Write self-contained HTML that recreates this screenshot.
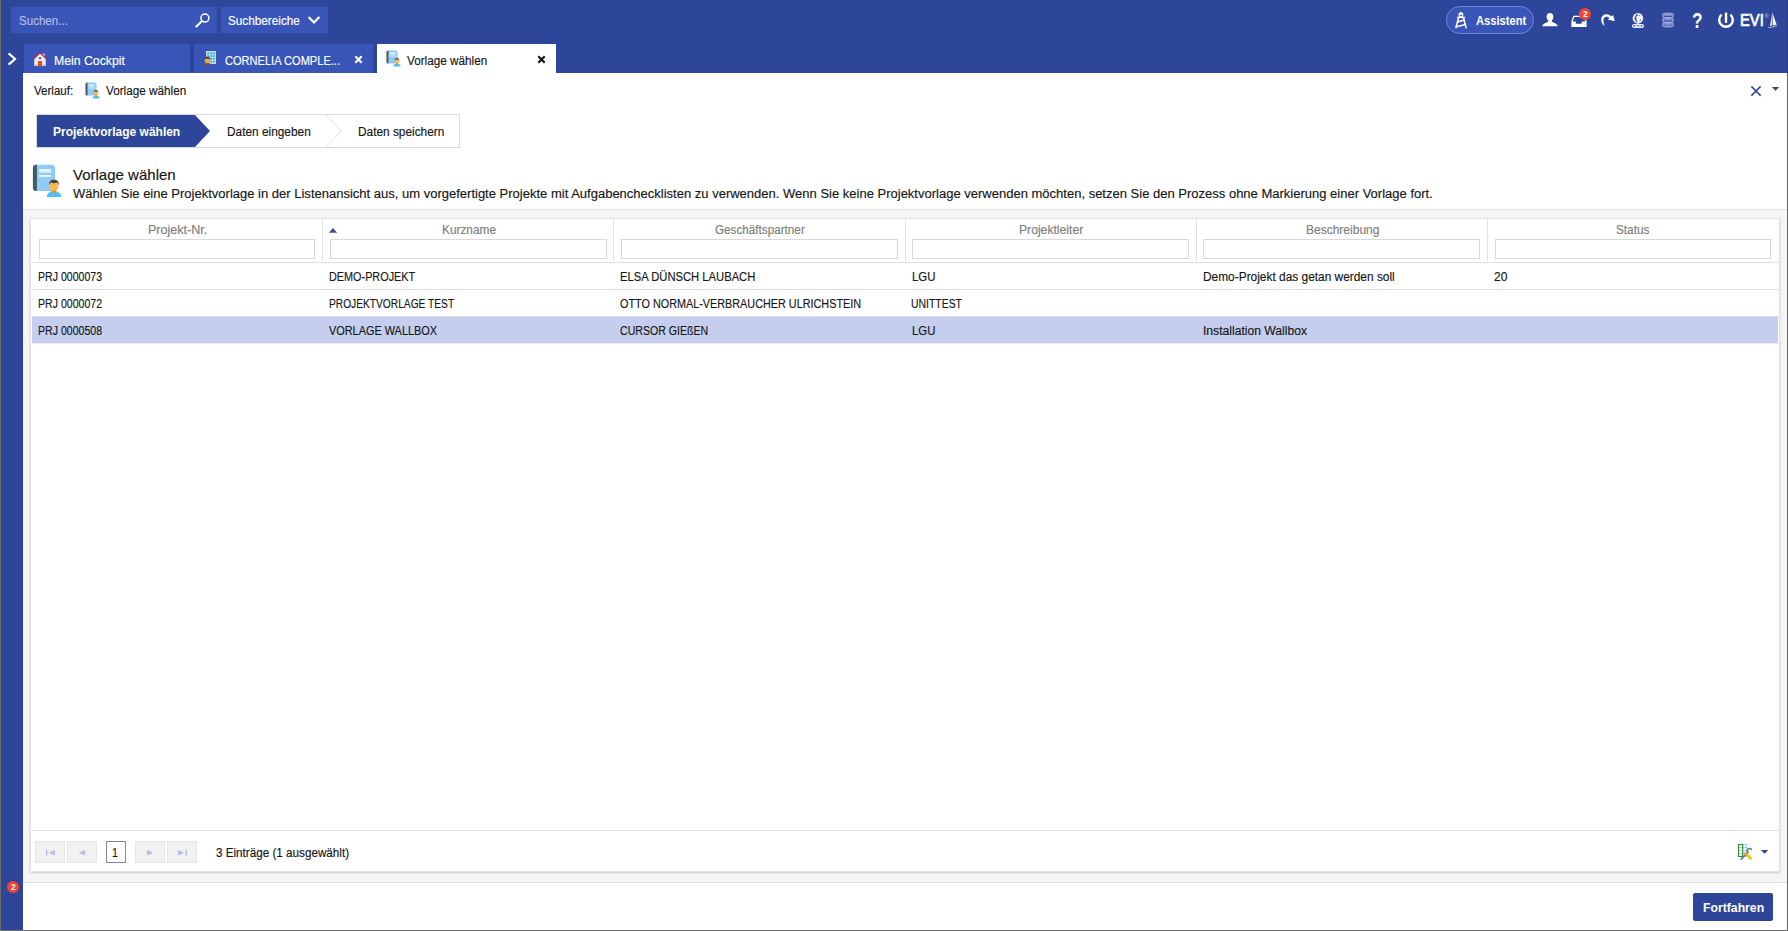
<!DOCTYPE html>
<html lang="de"><head><meta charset="utf-8"><title>Vorlage wählen</title>
<style>
html,body{margin:0;padding:0}
body{width:1788px;height:931px;overflow:hidden;position:relative;background:#2e4699;font-family:"Liberation Sans",sans-serif}
.abs,#texts .t,body>div,body>svg{position:absolute}
#texts{left:0;top:0;width:0;height:0}
#texts .t{white-space:nowrap;transform-origin:0 50%;display:block}
.tab{background:#3955b8;top:44px;height:29px}
.tab.active{background:#fff}
#content{left:23px;top:73px;width:1764px;height:857px;background:#fff}
#graybg{left:23px;top:209px;width:1764px;height:674px;background:#f5f5f5;border-top:1px solid #e2e2e2;border-bottom:1px solid #dcdcdc;box-sizing:border-box}
#panel{left:30px;top:218px;width:1750px;height:654px;background:#fff;box-sizing:border-box;border:1px solid #e3e3e3;box-shadow:0 1px 2px rgba(0,0,0,.18)}
.colsep{top:219px;width:1px;height:42px;background:#e2e2e2}
.hline{left:31px;width:1748px;height:1px;background:#e0e0e0}
.filter{top:239px;height:20px;width:276px;box-sizing:border-box;border:1px solid #d9d9d9;background:#fff}
.pbtn{top:841px;height:22px;width:30px;box-sizing:border-box;border:1px solid #e4e4e4;background:#f1f1f1}

</style></head>
<body>
<div id="leftedge" style="left:0;top:0;width:1px;height:931px;background:#6a6a6a"></div>
<div id="searchbox" style="left:11px;top:7px;width:206px;height:26px;background:#3955b8"></div>
<div id="searcharea" style="left:221px;top:7px;width:107px;height:26px;background:#3955b8"></div>
<div id="assist" style="left:1446px;top:6px;width:88px;height:28px;box-sizing:border-box;border:1px solid #6f86d4;border-radius:14px;background:#3955b8"></div>
<div class="tab" style="left:24px;width:166px"></div>
<div class="tab" style="left:194px;width:179px"></div>
<div class="tab active" style="left:377px;width:179px"></div>
<div id="content"></div>
<div id="graybg"></div>
<div id="panel"></div>
<div id="selrow" style="left:32px;top:317px;width:1746px;height:26px;background:#c5ceee"></div>
<div class="hline" style="top:262px"></div>
<div class="hline" style="top:289px"></div>
<div class="hline" style="top:316px"></div>
<div class="hline" style="top:343px;background:#ececec"></div>
<div class="hline" style="top:830px"></div>
<div class="colsep" style="left:322px"></div>
<div class="colsep" style="left:613px"></div>
<div class="colsep" style="left:905px"></div>
<div class="colsep" style="left:1196px"></div>
<div class="colsep" style="left:1487px"></div>
<div class="filter" style="left:39px"></div>
<div class="filter" style="left:330px;width:277px"></div>
<div class="filter" style="left:621px;width:277px"></div>
<div class="filter" style="left:912px;width:277px"></div>
<div class="filter" style="left:1203px;width:277px"></div>
<div class="filter" style="left:1495px"></div>
<div class="pbtn" style="left:35px"></div>
<div class="pbtn" style="left:67px"></div>
<div class="pbtn" style="left:135px"></div>
<div class="pbtn" style="left:167px"></div>
<div id="pagenum" style="left:106px;top:841px;width:20px;height:22px;box-sizing:border-box;border:1px solid #8a8a8a;background:#fff"></div>
<div id="steps" style="left:36px;top:114px;width:424px;height:34px;box-sizing:border-box;border:1px solid #dcdcdc;background:#fff"></div>
<svg id="stepsvg" style="left:36px;top:114px" width="424" height="34" viewBox="0 0 424 34">
  <polygon points="1,1 159,1 174,17 159,33 1,33" fill="#2e4699"/>
  <polyline points="290,0.5 305,17 290,33.5" fill="none" stroke="#e2e2e2" stroke-width="1"/>
</svg>
<div id="btn" style="left:1693px;top:893px;width:80px;height:28px;background:#2e4699;border-radius:2px"></div>
<div id="bottomedge" style="left:0;top:930px;width:1788px;height:1px;background:#6e6e6e"></div>
<div id="rightedge" style="left:1787px;top:73px;width:1px;height:858px;background:#666"></div>
<div id="rightedge2" style="left:1787px;top:0;width:1px;height:73px;background:#2a3f8a"></div>
<svg width="0" height="0" style="left:0;top:0">
  <defs>
    <symbol id="bookperson" viewBox="0 0 32 34">
      <path d="M3.9,0.8 H19.6 a3.5,3.5 0 0 1 3.5,3.5 V26.9 H3.9 Z" fill="#90caf9"/>
      <path d="M4.9,0.8 H3.9 a3,3 0 0 0 -3,3 V23.9 a3,3 0 0 0 3,3 H4.9 Z" fill="#455a64"/>
      <rect x="7" y="5" width="12" height="3.7" fill="#e3f2fd"/>
      <rect x="7" y="11" width="12" height="2" fill="#e3f2fd"/>
      <path d="M14.8,33 c0,-3.6 3,-6 7.2,-6 s7.2,2.4 7.2,6 Z" fill="#4fc3f7"/>
      <path d="M19.6,27.4 a2.5,2.2 0 0 0 4.8,0 Z" fill="#0288d1"/>
      <path d="M20.2,25 h3.6 v2.4 a1.8,1.8 0 0 1 -3.6,0 Z" fill="#ff9800"/>
      <ellipse cx="22" cy="21.6" rx="4.5" ry="5" fill="#ffb74d"/>
      <path d="M17.3,21.2 c-0.6,-3.6 1.6,-5.4 4.7,-5.4 s5.3,1.8 4.7,5.4 c-0.6,-1.6 -1.2,-2.2 -2,-2.6 c-1.6,0.8 -3.8,0.8 -5.4,0 c-0.8,0.4 -1.4,1 -2,2.6 Z" fill="#424242"/>
    </symbol>
  </defs>
</svg>
<!-- main big icon -->
<svg style="left:32px;top:164px" width="32" height="34"><use href="#bookperson"/></svg>
<!-- breadcrumb icon -->
<svg style="left:85px;top:81.5px" width="16" height="17"><use href="#bookperson"/></svg>
<!-- active tab icon -->
<svg style="left:385.5px;top:50px" width="16" height="17"><use href="#bookperson"/></svg>

<!-- sidebar chevron -->
<svg style="left:6px;top:51px" width="12" height="16" viewBox="0 0 12 16"><polyline points="2.6,2.4 9,8 2.6,13.6" fill="none" stroke="#fff" stroke-width="2.2" stroke-linejoin="miter"/></svg>
<!-- house -->
<svg style="left:33px;top:51px" width="14" height="16" viewBox="0 0 14 16">
  <rect x="9.8" y="2.6" width="1.8" height="3.4" fill="#e8eaf6"/>
  <path d="M1.2,7.6 L7,2.2 L12.8,7.6 V15 H1.2 Z" fill="#e8eaf6"/>
  <rect x="1.2" y="13.2" width="11.6" height="1.8" fill="#c5cae9"/>
  <path d="M0.4,8 L7,1.6 L13.6,8" fill="none" stroke="#c62828" stroke-width="1.3"/>
  <rect x="5" y="10" width="4" height="5" fill="#e64a19"/>
  <rect x="6.1" y="6.3" width="1.8" height="1.8" fill="#0d47a1"/>
</svg>
<!-- tab2 icon: building + person -->
<svg style="left:203px;top:50px" width="15" height="17" viewBox="0 0 15 17">
  <rect x="3" y="1" width="10" height="13" fill="#cfd8dc"/>
  <g fill="#29b6f6">
    <rect x="4.2" y="2.4" width="2" height="1.8"/><rect x="7" y="2.4" width="2" height="1.8"/><rect x="9.8" y="2.4" width="2" height="1.8"/>
    <rect x="4.2" y="5.2" width="2" height="1.8"/><rect x="7" y="5.2" width="2" height="1.8"/><rect x="9.8" y="5.2" width="2" height="1.8"/>
    <rect x="7" y="8" width="2" height="1.8"/><rect x="9.8" y="8" width="2" height="1.8"/>
    <rect x="7" y="10.8" width="2" height="1.8"/><rect x="9.8" y="10.8" width="2" height="1.8"/>
  </g>
  <path d="M1.4,13 h6 l-1.2,1.6 h-3.6 Z" fill="#546e7a"/>
  <ellipse cx="4.4" cy="10.2" rx="2.7" ry="3" fill="#ffa726"/>
  <path d="M1.6,9.6 c0,-2.4 1.2,-3 2.8,-3 s2.8,0.6 2.8,3 c-0.8,-1.2 -4.8,-1.2 -5.6,0 Z" fill="#5d4037"/>
  <path d="M3.8,13.2 h1.2 l0.3,2 l-0.9,1.2 l-0.9,-1.2 Z" fill="#d32f2f"/>
</svg>
<!-- tab close icons -->
<svg style="left:354px;top:55px" width="9" height="9" viewBox="0 0 9 9"><path d="M1.3,1.3 L7.7,7.7 M7.7,1.3 L1.3,7.7" stroke="#fff" stroke-width="2.1"/></svg>
<svg style="left:537px;top:55px" width="9" height="9" viewBox="0 0 9 9"><path d="M1.3,1.3 L7.7,7.7 M7.7,1.3 L1.3,7.7" stroke="#111" stroke-width="2.1"/></svg>
<!-- search magnifier -->
<svg style="left:195px;top:12px" width="16" height="16" viewBox="0 0 16 16"><circle cx="9.9" cy="6.1" r="4" fill="none" stroke="#fff" stroke-width="1.5"/><path d="M6.9,9.1 L1.4,14.4" stroke="#fff" stroke-width="2.1" stroke-linecap="round"/></svg>
<!-- suchbereiche chevron -->
<svg style="left:307px;top:15px" width="14" height="10" viewBox="0 0 14 10"><polyline points="1.6,2 7,7.6 12.4,2" fill="none" stroke="#fff" stroke-width="2.1"/></svg>
<!-- lighthouse -->
<svg style="left:1454px;top:11px" width="14" height="18" viewBox="0 0 14 18">
  <path d="M6.900,0.800 L10.100,3.300 H3.700 Z" fill="#fff"/>
  <path d="M4.700,3.200 H9.100 V6 H4.700 Z M6,4 H7.900 V5.200 H6 Z" fill="#fff" fill-rule="evenodd"/>
  <rect x="2.900" y="5.800" width="8.200" height="1.300" fill="#fff"/>
  <g fill="none" stroke="#fff" stroke-width="1.500" stroke-linecap="round">
    <path d="M4.400,7.200 L1.900,16.800 M9.600,7.200 L12.100,16.800"/>
    <path d="M3.600,11 L10.300,9" stroke-width="1.400"/>
    <path d="M2.500,15.800 L11.400,13.400" stroke-width="1.600"/>
  </g>
</svg>
<!-- user -->
<svg style="left:1542px;top:12px" width="16" height="16" viewBox="0 0 16 16">
  <path d="M8,1 c2.2,0 3.4,1.6 3.4,3.8 c0,1.8 -0.8,3.2 -1.6,3.9 v1 c1.4,0.8 5.4,1.6 6,4.6 H0.2 c0.6,-3 4.6,-3.800 6,-4.6 v-1 c-0.8,-0.700 -1.600,-2.100 -1.600,-3.900 c0,-2.200 1.200,-3.800 3.400,-3.800 Z" fill="#fff"/>
</svg>
<!-- inbox -->
<svg style="left:1571px;top:15px" width="16" height="13" viewBox="0 0 16 13">
  <path d="M0.400,6.300 L2.400,0.800 H13.600 L15.600,6.300 V12.100 H0.400 Z M1.700,6.500 L3.300,1.900 H12.700 L14.300,6.500 H10.700 V8.700 H4.800 V6.500 Z" fill="#fff" fill-rule="evenodd"/>
</svg>
<!-- redo -->
<svg style="left:1600px;top:12px" width="16" height="16" viewBox="0 0 16 16">
  <path d="M4.2,13.8 C2.2,12 1.2,10 1.2,7.5 C1.2,4.4 3.6,2.200 6.500,2.200 C8.400,2.200 9.900,3 11,4.400 L13.200,3 L14.700,9.200 L7.800,7.400 L9.400,6.200 C8.600,5.200 7.600,4.800 6.500,4.800 C4.800,4.800 3.400,6.200 3.400,8 C3.400,10 3.800,12 4.600,13.600 Z" fill="#fff"/>
</svg>
<!-- globe cmd -->
<svg style="left:1631px;top:12px" width="14" height="17" viewBox="0 0 14 17">
  <circle cx="6.900" cy="6.200" r="5.300" fill="#f1f3fb"/>
  <path d="M5.400,2.300 L7.600,2.600 L6.600,3.800 L5.600,4.300 L5,5.800 L5.800,7 L5.400,8.400 L6.200,9.600 L5.800,10.600 L4.600,9.400 L4,7.400 L3.200,6 L4.200,4.400 Z M9.200,7.400 L10.200,7 L9.600,8.600 L8.400,9.400 Z M7.800,3 L9,3.200 L8.200,4.200 Z" fill="#3c54a8"/>
  <rect x="6.300" y="11.200" width="1.300" height="1.400" fill="#e4e8f7"/>
  <rect x="1.100" y="12" width="11.900" height="3.900" rx="1.700" fill="#e4e8f7"/>
  <circle cx="3.300" cy="13.800" r="0.900" fill="#3c54a8"/><circle cx="10.600" cy="13.800" r="0.900" fill="#3c54a8"/>
  <path d="M5.400,13.800 h3.200" stroke="#5d72bd" stroke-width="0.900"/>
</svg>
<!-- database -->
<svg style="left:1661px;top:12px" width="14" height="16" viewBox="0 0 14 16">
  <g fill="#6275c1" stroke="#a7b3e0" stroke-width="1">
    <rect x="1.500" y="10.400" width="11" height="4.500" rx="2.300"/>
    <rect x="1.500" y="5.800" width="11" height="4.200" rx="2.100"/>
    <rect x="1.500" y="1.300" width="11" height="4.100" rx="2.050"/>
  </g>
  <g fill="#8f9dd5"><ellipse cx="7" cy="2.700" rx="4.200" ry="0.900"/><ellipse cx="7" cy="7.100" rx="4.200" ry="0.800"/><ellipse cx="7" cy="11.700" rx="4.200" ry="0.800"/></g>
  <g stroke="#2e4699" stroke-width="0.800"><path d="M3,4.500 h8 M3,9.100 h8"/></g>
</svg>
<!-- power -->
<svg style="left:1717px;top:11px" width="18" height="18" viewBox="0 0 18 18">
  <path d="M4.630,3.690 A6.800,6.800 0 1 0 13.370,3.690" fill="none" stroke="#fff" stroke-width="2.400"/>
  <path d="M9,1.600 V11.900" stroke="#fff" stroke-width="2.400"/>
</svg>
<!-- sail -->
<svg style="left:1767px;top:11px" width="11" height="18" viewBox="0 0 11 18">
  <path d="M5.300,1.300 L9.600,13.500 L5.700,14.600 Z" fill="#f4f6fc"/>
  <path d="M4.900,3 L5.100,14.700 L2.700,14.900 C3.800,11 4.500,7 4.900,3 Z" fill="#cfd6ef"/>
  <path d="M1.100,16.500 Q5.600,16.300 9.900,13.900 L9.600,15.100 Q6,17.100 1.100,16.900 Z" fill="#e9ecf8"/>
</svg>
<!-- content close X + dropdown -->
<svg style="left:1750px;top:85px" width="12" height="12" viewBox="0 0 12 12"><path d="M1.400,1.400 L10.600,10.600 M10.600,1.400 L1.400,10.600" stroke="#2e4699" stroke-width="1.500"/></svg>
<svg style="left:1771px;top:86px" width="9" height="6" viewBox="0 0 9 6"><path d="M0.800,1 H8.200 L4.500,4.800 Z" fill="#2e4699"/></svg>
<!-- sort arrow -->
<svg style="left:328px;top:227px" width="10" height="7" viewBox="0 0 10 7"><path d="M0.800,5.800 L5,1 L9.200,5.800 Z" fill="#345199"/></svg>
<!-- pager icons -->
<svg style="left:35px;top:841px" width="162" height="22" viewBox="0 0 162 22" fill="#b5bfe6">
  <rect x="11" y="9" width="1.400" height="5.600"/><path d="M20,9 V14.600 L13.600,11.800 Z"/>
  <path d="M50,9 V14.600 L43.600,11.800 Z"/>
  <path d="M112,9 V14.600 L118.400,11.800 Z"/>
  <path d="M143,9 V14.600 L149.400,11.800 Z"/><rect x="150.600" y="9" width="1.400" height="5.600"/>
</svg>
<!-- table config icon -->
<svg style="left:1737px;top:843px" width="17" height="18" viewBox="0 0 17 18">
  <rect x="6" y="1.400" width="3.800" height="12.200" fill="#fff" stroke="#90caf9" stroke-width="0.900"/>
  <path d="M6,4.500 h3.800 M6,7.400 h3.800 M6,10.500 h3.800" stroke="#90caf9" stroke-width="0.900"/>
  <rect x="1.500" y="1.500" width="4.100" height="12" fill="#fff" stroke="#2e8b2e" stroke-width="1.100"/>
  <path d="M2,4.500 h3.200 M2,7.400 h3.200 M2,10.500 h3.200" stroke="#90caf9" stroke-width="0.900"/>
  <path d="M4.300,16.200 L11,9.200" stroke="#607d8b" stroke-width="1.700" stroke-linecap="round"/>
  <path d="M11.300,9.700 a2.300,2.300 0 1 1 3.400,-2.600" fill="none" stroke="#607d8b" stroke-width="1.500"/>
  <path d="M4.600,6.800 L8.600,10.600" stroke="#b0bec5" stroke-width="1"/>
  <path d="M9.100,11 L13.600,15.300" stroke="#ffc107" stroke-width="2.700" stroke-linecap="round"/>
  <circle cx="9" cy="10.900" r="1.300" fill="#ff9800"/>
</svg>
<svg style="left:1760px;top:849px" width="9" height="6" viewBox="0 0 9 6"><path d="M0.800,1 H8.200 L4.500,4.800 Z" fill="#2e4699"/></svg>
<div id="badge1" style="left:1579px;top:8px;width:12px;height:12px;border-radius:6px;background:#f44336"></div>
<div id="badge2" style="left:7px;top:881px;width:12px;height:12px;border-radius:6px;background:#f44336"></div>
<span class="abs" style="left:1764.3px;top:12px;font-size:6px;line-height:8px;color:#c3caeb">®</span>

<div id="texts">
<span class="t" style="left:18.94px;top:12px;font-size:12.5px;line-height:18px;font-weight:400;color:#b4c0ea;-webkit-text-stroke:0.15px #b4c0ea;transform:scaleX(0.9256)">Suchen...</span>
<span class="t" style="left:228.10px;top:12px;font-size:12.5px;line-height:18px;font-weight:400;color:#ffffff;-webkit-text-stroke:0.15px #ffffff;transform:scaleX(0.9398)">Suchbereiche</span>
<span class="t" style="left:1475.88px;top:12px;font-size:12.5px;line-height:18px;font-weight:700;color:#ffffff;transform:scaleX(0.8941)">Assistent</span>
<span class="t" style="left:1740.21px;top:9px;font-size:16.2px;line-height:23px;font-weight:400;color:#ffffff;-webkit-text-stroke:0.7px #ffffff;transform:scaleX(0.9096)">EVI</span>
<span class="t" style="left:1691.78px;top:6px;font-size:21.5px;line-height:30px;font-weight:700;color:#ffffff;transform:scaleX(0.8047)">?</span>
<span class="t" style="left:53.77px;top:52px;font-size:12.5px;line-height:18px;font-weight:400;color:#ffffff;-webkit-text-stroke:0.15px #ffffff;transform:scaleX(0.9811)">Mein Cockpit</span>
<span class="t" style="left:224.62px;top:52px;font-size:12.5px;line-height:18px;font-weight:400;color:#ffffff;-webkit-text-stroke:0.15px #ffffff;transform:scaleX(0.8853)">CORNELIA COMPLE...</span>
<span class="t" style="left:407.21px;top:52px;font-size:12.5px;line-height:18px;font-weight:400;color:#161616;-webkit-text-stroke:0.15px #161616;transform:scaleX(0.9385)">Vorlage wählen</span>
<span class="t" style="left:34.21px;top:82px;font-size:12.5px;line-height:18px;font-weight:400;color:#161616;-webkit-text-stroke:0.15px #161616;transform:scaleX(0.9255)">Verlauf:</span>
<span class="t" style="left:106.21px;top:82px;font-size:12.5px;line-height:18px;font-weight:400;color:#161616;-webkit-text-stroke:0.15px #161616;transform:scaleX(0.9385)">Vorlage wählen</span>
<span class="t" style="left:52.91px;top:123px;font-size:12.5px;line-height:18px;font-weight:700;color:#ffffff;transform:scaleX(0.9586)">Projektvorlage wählen</span>
<span class="t" style="left:226.74px;top:123px;font-size:12.5px;line-height:18px;font-weight:400;color:#161616;-webkit-text-stroke:0.15px #161616;transform:scaleX(0.9488)">Daten eingeben</span>
<span class="t" style="left:357.74px;top:123px;font-size:12.5px;line-height:18px;font-weight:400;color:#161616;-webkit-text-stroke:0.15px #161616;transform:scaleX(0.9482)">Daten speichern</span>
<span class="t" style="left:73.21px;top:164px;font-size:15px;line-height:21px;font-weight:400;color:#161616;-webkit-text-stroke:0.15px #161616;transform:scaleX(1.0010)">Vorlage wählen</span>
<span class="t" style="left:73.24px;top:185px;font-size:12.5px;line-height:18px;font-weight:400;color:#161616;-webkit-text-stroke:0.15px #161616;transform:scaleX(1.0406)">Wählen Sie eine Projektvorlage in der Listenansicht aus, um vorgefertigte Projekte mit Aufgabenchecklisten zu verwenden. Wenn Sie keine Projektvorlage verwenden möchten, setzen Sie den Prozess ohne Markierung einer Vorlage fort.</span>
<span class="t" style="left:147.71px;top:222px;font-size:12px;line-height:17px;font-weight:400;color:#7d7d7d;-webkit-text-stroke:0.15px #7d7d7d;transform:scaleX(1.0437)">Projekt-Nr.</span>
<span class="t" style="left:441.85px;top:222px;font-size:12px;line-height:17px;font-weight:400;color:#7d7d7d;-webkit-text-stroke:0.15px #7d7d7d;transform:scaleX(0.9877)">Kurzname</span>
<span class="t" style="left:714.75px;top:222px;font-size:12px;line-height:17px;font-weight:400;color:#7d7d7d;-webkit-text-stroke:0.15px #7d7d7d;transform:scaleX(0.9754)">Geschäftspartner</span>
<span class="t" style="left:1018.74px;top:222px;font-size:12px;line-height:17px;font-weight:400;color:#7d7d7d;-webkit-text-stroke:0.15px #7d7d7d;transform:scaleX(1.0131)">Projektleiter</span>
<span class="t" style="left:1305.80px;top:222px;font-size:12px;line-height:17px;font-weight:400;color:#7d7d7d;-webkit-text-stroke:0.15px #7d7d7d;transform:scaleX(1.0004)">Beschreibung</span>
<span class="t" style="left:1616.30px;top:222px;font-size:12px;line-height:17px;font-weight:400;color:#7d7d7d;-webkit-text-stroke:0.15px #7d7d7d;transform:scaleX(0.9810)">Status</span>
<span class="t" style="left:37.93px;top:268px;font-size:12.5px;line-height:18px;font-weight:400;color:#161616;-webkit-text-stroke:0.15px #161616;transform:scaleX(0.8452)">PRJ 0000073</span>
<span class="t" style="left:328.89px;top:268px;font-size:12.5px;line-height:18px;font-weight:400;color:#161616;-webkit-text-stroke:0.15px #161616;transform:scaleX(0.8674)">DEMO-PROJEKT</span>
<span class="t" style="left:619.85px;top:268px;font-size:12.5px;line-height:18px;font-weight:400;color:#161616;-webkit-text-stroke:0.15px #161616;transform:scaleX(0.8978)">ELSA DÜNSCH LAUBACH</span>
<span class="t" style="left:911.87px;top:268px;font-size:12.5px;line-height:18px;font-weight:400;color:#161616;-webkit-text-stroke:0.15px #161616;transform:scaleX(0.9123)">LGU</span>
<span class="t" style="left:1202.73px;top:268px;font-size:12.5px;line-height:18px;font-weight:400;color:#161616;-webkit-text-stroke:0.15px #161616;transform:scaleX(0.9517)">Demo-Projekt das getan werden soll</span>
<span class="t" style="left:1493.71px;top:268px;font-size:12.5px;line-height:18px;font-weight:400;color:#161616;-webkit-text-stroke:0.15px #161616;transform:scaleX(0.9599)">20</span>
<span class="t" style="left:37.93px;top:295px;font-size:12.5px;line-height:18px;font-weight:400;color:#161616;-webkit-text-stroke:0.15px #161616;transform:scaleX(0.8454)">PRJ 0000072</span>
<span class="t" style="left:328.98px;top:295px;font-size:12.5px;line-height:18px;font-weight:400;color:#161616;-webkit-text-stroke:0.15px #161616;transform:scaleX(0.8163)">PROJEKTVORLAGE TEST</span>
<span class="t" style="left:619.79px;top:295px;font-size:12.5px;line-height:18px;font-weight:400;color:#161616;-webkit-text-stroke:0.15px #161616;transform:scaleX(0.8662)">OTTO NORMAL-VERBRAUCHER ULRICHSTEIN</span>
<span class="t" style="left:911.26px;top:295px;font-size:12.5px;line-height:18px;font-weight:400;color:#161616;-webkit-text-stroke:0.15px #161616;transform:scaleX(0.8342)">UNITTEST</span>
<span class="t" style="left:37.98px;top:322px;font-size:12.5px;line-height:18px;font-weight:400;color:#161616;-webkit-text-stroke:0.15px #161616;transform:scaleX(0.8450)">PRJ 0000508</span>
<span class="t" style="left:329.26px;top:322px;font-size:12.5px;line-height:18px;font-weight:400;color:#161616;-webkit-text-stroke:0.15px #161616;transform:scaleX(0.8720)">VORLAGE WALLBOX</span>
<span class="t" style="left:619.79px;top:322px;font-size:12.5px;line-height:18px;font-weight:400;color:#161616;-webkit-text-stroke:0.15px #161616;transform:scaleX(0.8453)">CURSOR GIEßEN</span>
<span class="t" style="left:911.91px;top:322px;font-size:12.5px;line-height:18px;font-weight:400;color:#161616;-webkit-text-stroke:0.15px #161616;transform:scaleX(0.9125)">LGU</span>
<span class="t" style="left:1202.55px;top:322px;font-size:12.5px;line-height:18px;font-weight:400;color:#161616;-webkit-text-stroke:0.15px #161616;transform:scaleX(0.9704)">Installation Wallbox</span>
<span class="t" style="left:112.25px;top:844px;font-size:12.5px;line-height:18px;font-weight:400;color:#161616;-webkit-text-stroke:0.15px #161616;transform:scaleX(0.8571)">1</span>
<span class="t" style="left:215.55px;top:844px;font-size:12.5px;line-height:18px;font-weight:400;color:#161616;-webkit-text-stroke:0.15px #161616;transform:scaleX(0.9342)">3 Einträge (1 ausgewählt)</span>
<span class="t" style="left:1702.99px;top:899px;font-size:12.5px;line-height:18px;font-weight:700;color:#ffffff;transform:scaleX(0.9779)">Fortfahren</span>
<span class="t" style="left:1582.91px;top:8px;font-size:8.5px;line-height:12px;font-weight:700;color:#ffffff;transform:scaleX(1.0000)">2</span>
<span class="t" style="left:10.91px;top:881px;font-size:8.5px;line-height:12px;font-weight:700;color:#ffffff;transform:scaleX(1.0000)">2</span>
</div>
</body></html>
